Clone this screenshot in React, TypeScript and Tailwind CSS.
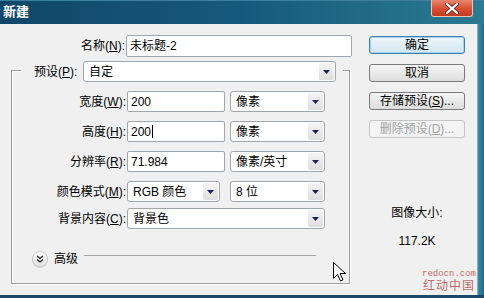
const Arrow = () => (
  <svg width="7" height="4" viewBox="0 0 7 4">
    <path d="M0 0h7L3.5 4z" fill="#1b1f5e" />
  </svg>
)

const Select = ({ value, w }: { value: string; w: string }) => (
  <div className={`flex h-[21px] ${w} items-stretch rounded-[3px] border border-[#9fa6ae] bg-white p-[1px]`}>
    <span className="flex flex-1 items-center pl-[4px] leading-none">{value}</span>
    <span className="flex w-[15px] items-center justify-center rounded-[2px] bg-gradient-to-b from-[#f4f4f4] to-[#dedede]">
      <Arrow />
    </span>
  </div>
)

const Input = ({ value, w, caret }: { value: string; w: string; caret?: boolean }) => (
  <div className={`flex h-[21px] ${w} items-center rounded-[2px] border border-[#9fa6ae] bg-white pl-[3px] leading-none`}>
    {value}
    {caret && <span className="ml-[1px] h-[13px] w-px bg-black" />}
  </div>
)

const Label = ({ text, k, rest }: { text: string; k: string; rest?: string }) => (
  <span className="w-[115px] pr-[1px] text-right">
    {text}(<span className="underline">{k}</span>){rest ?? ':'}
  </span>
)

const Btn = ({ children, focus, disabled }: { children: React.ReactNode; focus?: boolean; disabled?: boolean }) => (
  <div
    className={`flex h-[18px] w-[96px] items-center justify-center rounded-[3px] border bg-gradient-to-b leading-none ${
      focus
        ? 'border-[#3d7fb3] from-[#eef6fb] to-[#d3e6f2] shadow-[inset_0_0_0_1px_#9fd3f1]'
        : disabled
          ? 'border-[#c4c4c4] from-[#f4f4f4] to-[#f4f4f4] text-[#a3a3a3]'
          : 'border-[#7a7a7a] from-[#f6f6f6] to-[#dcdcdc]'
    }`}
  >
    {children}
  </div>
)

export default function App() {
  return (
    <div className="relative flex h-[298px] w-[484px] flex-col overflow-hidden bg-[#f0f0f0] font-['Liberation_Sans','Noto_Sans_CJK_SC',sans-serif] text-[12px] text-black">
      {/* title bar */}
      <div className="flex h-[24px] items-start bg-gradient-to-r from-[#0f476a] via-[#17597c] to-[#2a7b93] shadow-[inset_0_1px_0_#3d7f9f]">
        <span className="ml-[3px] mt-[5px] text-[13px] font-bold leading-[14px] text-white">新建</span>
        <div className="ml-auto mr-[11px] flex h-[17px] w-[42px] items-center justify-center rounded-b-[3px] border border-t-0 border-[#f2c2b4] bg-gradient-to-b from-[#e8866d] via-[#d95237] to-[#c23a22]">
          <svg width="14" height="11" viewBox="0 0 14 11">
            <path d="M2 1l10 9M12 1L2 10" stroke="#6b3328" strokeWidth="4" strokeLinecap="round" />
            <path d="M2 1l10 9M12 1L2 10" stroke="#fff" strokeWidth="2.2" strokeLinecap="round" />
          </svg>
        </div>
      </div>

      <div className="flex flex-1">
        <div className="flex flex-1">
          {/* left side */}
          <div className="w-[369px]">
            <div className="mt-[11px] flex items-center">
              <span className="w-[126px] pr-[1px] text-right">
                名称(<span className="underline">N</span>):
              </span>
              <div className="flex h-[22px] w-[226px] items-center rounded-[2px] border border-[#9fa6ae] bg-white pl-[3px] leading-none">
                未标题-2
              </div>
            </div>

            <div className="ml-[11px] mt-[13px] h-[214px] w-[339px] border border-[#9c9c9c] shadow-[inset_1px_1px_0_#fff,1px_1px_0_#fff]">
              <div className="-mt-[10px] ml-[9px] flex w-fit items-center bg-[#f0f0f0] pl-[13px] pr-[7px]">
                <span className="w-[49px]">
                  预设(<span className="underline">P</span>):
                </span>
                <Select value="自定" w="w-[253px]" />
              </div>

              <div className="mt-[9px] flex items-center">
                <Label text="宽度" k="W" />
                <Input value="200" w="w-[98px]" />
                <div className="ml-[5px]">
                  <Select value="像素" w="w-[95px]" />
                </div>
              </div>
              <div className="mt-[9px] flex items-center">
                <Label text="高度" k="H" />
                <Input value="200" w="w-[98px]" caret />
                <div className="ml-[5px]">
                  <Select value="像素" w="w-[95px]" />
                </div>
              </div>
              <div className="mt-[9px] flex items-center">
                <Label text="分辨率" k="R" />
                <Input value="71.984" w="w-[98px]" />
                <div className="ml-[5px]">
                  <Select value="像素/英寸" w="w-[95px]" />
                </div>
              </div>
              <div className="mt-[9px] flex items-center">
                <Label text="颜色模式" k="M" />
                <Select value="RGB 颜色" w="w-[93px]" />
                <div className="ml-[10px]">
                  <Select value="8 位" w="w-[95px]" />
                </div>
              </div>
              <div className="mt-[6px] flex items-center">
                <Label text="背景内容" k="C" />
                <Select value="背景色" w="w-[198px]" />
              </div>

              <div className="ml-[20px] mt-[22px] flex items-center">
                <span className="flex h-[16px] w-[16px] items-center justify-center rounded-full border border-[#c9c9c9] bg-gradient-to-b from-white to-[#e2e2e2] shadow-[0_1px_0_#d0d0d0]">
                  <svg width="8" height="8" viewBox="0 0 8 8">
                    <path d="M1 1l3 2.5L7 1M1 4.5L4 7l3-2.5" stroke="#222" strokeWidth="1.3" fill="none" />
                  </svg>
                </span>
                <span className="ml-[6px] leading-none">高级</span>
                <span className="-mt-[6px] ml-[6px] h-[2px] w-[232px] border-t border-[#a8a8a8] border-b-white" />
              </div>
            </div>
          </div>

          {/* right side */}
          <div className="flex w-[96px] flex-col items-center">
            <div className="mt-[12px] flex flex-col gap-[10px]">
              <Btn focus>确定</Btn>
              <Btn>取消</Btn>
              <Btn>
                存储预设(<span className="underline">S</span>)...
              </Btn>
              <Btn disabled>
                删除预设(<span className="underline">D</span>)...
              </Btn>
            </div>
            <span className="mt-[68px] leading-[14px]">图像大小:</span>
            <span className="mt-[14px] leading-[14px]">117.2K</span>
          </div>
        </div>
        <div className="w-[7px] border-l border-[#7fb5c6] bg-gradient-to-r from-[#3a8aa2] to-[#1f6a84]" />
      </div>
      <div className="h-[3px] bg-[#1c4a66]" />

      {/* mouse cursor */}
      <svg className="absolute left-[333px] top-[262px]" width="13" height="20" viewBox="0 0 13 20">
        <path d="M0.5 0.5v16l4-4 3 6.5 2.5-1.2-3-6.3h5.5z" fill="#fff" stroke="#000" strokeWidth="1" />
      </svg>

      {/* watermark */}
      <div className="absolute left-[422px] top-[270px] flex flex-col items-center leading-none text-[#c46a6a]">
        <span className="font-['Liberation_Mono',monospace] text-[9px]">redocn.com</span>
        <span className="mt-[1px] text-[12px] tracking-[1px]">红动中国</span>
      </div>
    </div>
  )
}
